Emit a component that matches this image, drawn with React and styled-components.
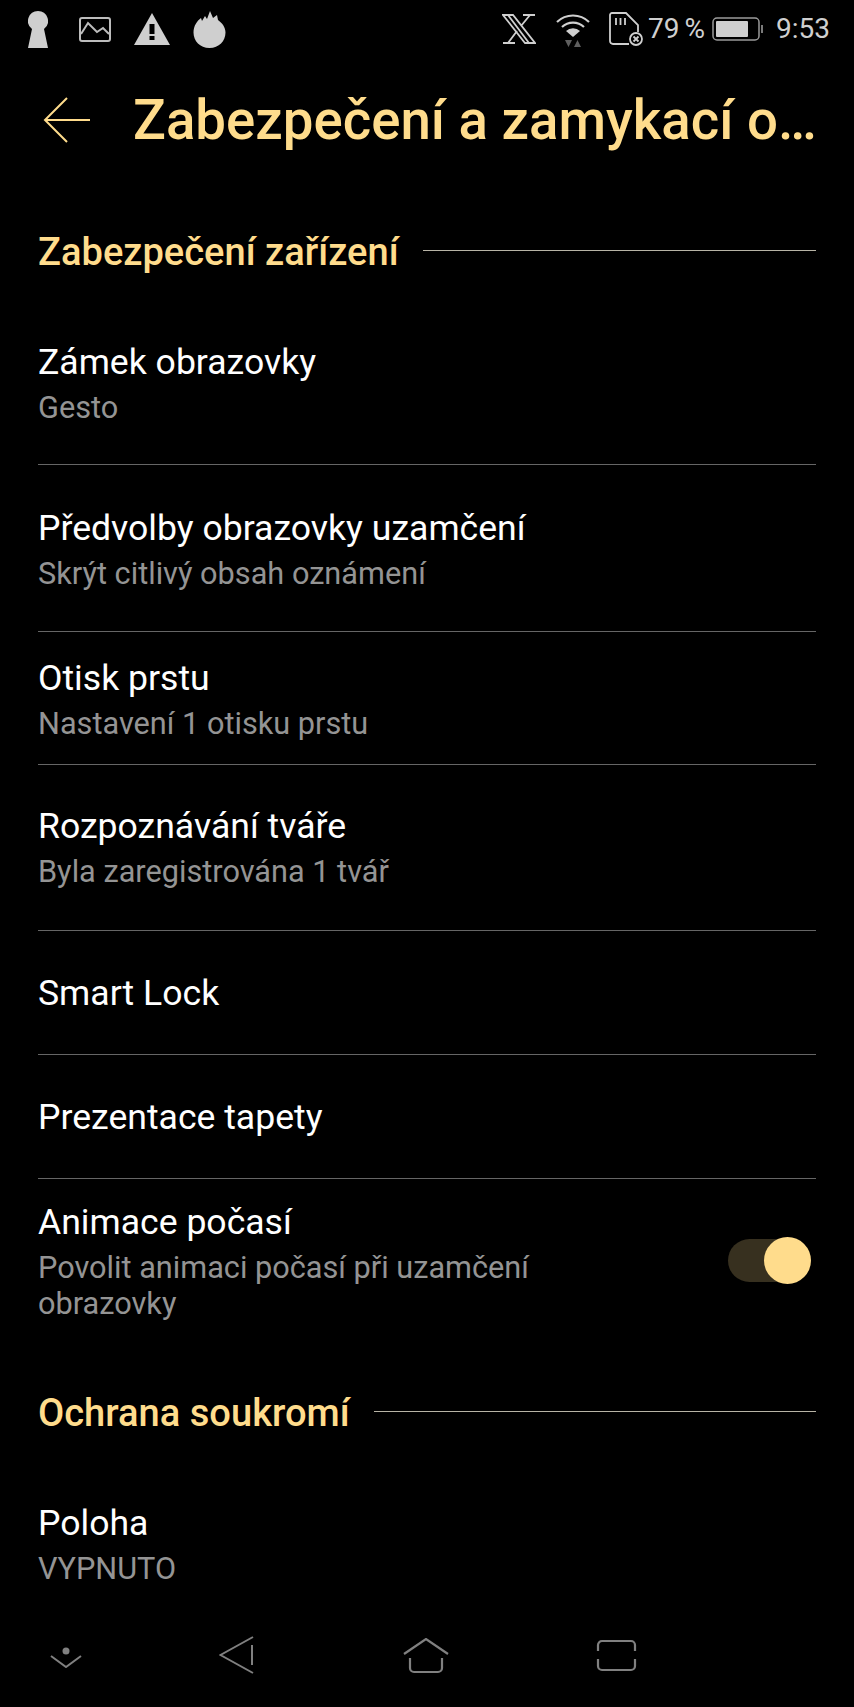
import React from "react";
import styled, { createGlobalStyle } from "styled-components";

const GOLD = "#ffdc8c";

const GlobalStyle = createGlobalStyle`
  html, body {
    margin: 0;
    background: #000;
  }
  * {
    box-sizing: border-box;
  }
`;

const Screen = styled.div`
  width: 854px;
  height: 1707px;
  background: #000;
  color: #fff;
  font-family: Roboto, "Noto Sans", sans-serif;
  display: flex;
  flex-direction: column;
  overflow: hidden;
`;

const StatusBar = styled.div`
  height: 58px;
  display: flex;
  align-items: flex-start;
  justify-content: space-between;
  padding: 10px 24px 0 28px;
`;

const StatusGroup = styled.div`
  display: flex;
  align-items: center;
  height: 38px;
`;

const StatusIcon = styled.svg`
  display: block;
  flex: none;
  margin-left: ${(p) => p.$ml || 0}px;
`;

const StatusText = styled.span`
  font-size: 28px;
  line-height: 38px;
  word-spacing: -2px;
  color: #cfcfcf;
  margin-left: ${(p) => p.$ml || 0}px;
`;

const AppBar = styled.header`
  height: 124px;
  display: flex;
  align-items: center;
  padding: 0 38px 0 43px;
`;

const BackButton = styled.svg`
  flex: none;
  margin-right: 42px;
`;

const Title = styled.h1`
  margin: 0;
  font-size: 54.6px;
  font-weight: 500;
  line-height: 60px;
  color: ${GOLD};
  white-space: nowrap;
`;

const Main = styled.main`
  flex: 1;
  min-height: 0;
  overflow: hidden;
  padding: 0 38px;
`;

const SectionHead = styled.div`
  display: flex;
  align-items: center;
  gap: 24px;
  height: 46px;
  margin-top: ${(p) => p.$mt}px;
`;

const SectionTitle = styled.h2`
  margin: 0;
  font-size: 38.1px;
  font-weight: 500;
  line-height: 46px;
  color: ${GOLD};
  white-space: nowrap;
`;

const SectionLine = styled.span`
  flex: 1;
  height: 1px;
  background: #b8b4a6;
  margin-top: -3px;
`;

const Row = styled.div`
  display: flex;
  align-items: center;
  justify-content: space-between;
  padding: ${(p) => p.$top}px 0 ${(p) => p.$bottom}px;
  border-bottom: ${(p) => (p.$plain ? "none" : "1px solid #666")};
`;

const RowText = styled.div`
  width: 560px;
`;

const RowTitle = styled.div`
  font-size: 35.6px;
  line-height: 46px;
  color: #fff;
  white-space: nowrap;
`;

const RowSub = styled.div`
  margin-top: 5px;
  font-size: 30.7px;
  line-height: 36px;
  color: #949494;
`;

const Toggle = styled.div`
  position: relative;
  width: 72px;
  height: 43px;
  margin-right: 16px;
  border-radius: 22px;
  background: #37301f;
  flex: none;
`;

const Knob = styled.span`
  position: absolute;
  top: -2px;
  right: -11px;
  width: 47px;
  height: 47px;
  border-radius: 50%;
  background: ${GOLD};
`;

const NavBar = styled.nav`
  height: 75px;
  display: flex;
  align-items: flex-start;
  padding: 0 0 0 50px;
`;

const NavIcon = styled.svg`
  display: block;
  flex: none;
  margin-left: ${(p) => p.$ml || 0}px;
  margin-top: ${(p) => p.$mt || 0}px;
`;

const rows = [
  { title: "Zámek obrazovky", sub: "Gesto", top: 64, bottom: 38 },
  { title: "Předvolby obrazovky uzamčení", sub: "Skrýt citlivý obsah oznámení", top: 40, bottom: 39 },
  { title: "Otisk prstu", sub: "Nastavení 1 otisku prstu", top: 23, bottom: 22 },
  { title: "Rozpoznávání tváře", sub: "Byla zaregistrována 1 tvář", top: 38, bottom: 40 },
  { title: "Smart Lock", top: 39, bottom: 38 },
  { title: "Prezentace tapety", top: 39, bottom: 38 },
];

const SettingRow = ({ title, sub, top, bottom, plain, children }) => (
  <Row $top={top} $bottom={bottom} $plain={plain}>
    <RowText>
      <RowTitle>{title}</RowTitle>
      {sub && <RowSub>{sub}</RowSub>}
    </RowText>
    {children}
  </Row>
);

const App = () => (
  <Screen>
    <GlobalStyle />
    <StatusBar>
      <StatusGroup>
        <StatusIcon width="20" height="37" viewBox="0 0 20 37">
          <path d="M10 0a10 10 0 0 1 6 18l4 19H0l4-19a10 10 0 0 1 6-18z" fill="#cfcfcf" />
        </StatusIcon>
        <StatusIcon $ml={31} width="32" height="25" viewBox="0 0 32 25" fill="none" stroke="#bdbdbd" strokeWidth="2">
          <rect x="1" y="1" width="30" height="23" rx="2" />
          <path d="M2 17l7-11 9 9 6-4 6 6" />
        </StatusIcon>
        <StatusIcon $ml={23} width="36" height="32" viewBox="0 0 36 32">
          <path fillRule="evenodd" d="M18 0l18 32H0zM15.500 11v10h5V11zM15.500 23v4h5v-4z" fill="#cfcfcf" />
        </StatusIcon>
        <StatusIcon $ml={23} width="33" height="37" viewBox="0 0 33 37">
          <path d="M16.500 37C7 37 .5 30 .5 21.500.5 15 4 10 8 7l1 3 3-5 2 3 3-8 3 7 4-3 1 5c4 3 7.500 7 7.500 12.500C32.500 30 26 37 16.500 37z" fill="#cfcfcf" />
        </StatusIcon>
      </StatusGroup>
      <StatusGroup>
        <StatusIcon width="34" height="30" viewBox="0 0 34 30" fill="none" stroke="#cfcfcf" strokeWidth="1.800">
          <path d="M1 1h10l22 28H23zM6 1l21 28M21 1h12M1 29h12M28 1l-9 11M15 17L6 29" />
        </StatusIcon>
        <StatusIcon $ml={20} width="34" height="35" viewBox="0 0 34 35" fill="none">
          <path d="M1 10a23 23 0 0 1 32 0M6 15a16 16 0 0 1 22 0" stroke="#cfcfcf" strokeWidth="2.200" />
          <path d="M10 19a10 10 0 0 1 14 0l-7 6z" fill="#cfcfcf" />
          <path d="M9 28h7l-3.500 7zM18 35l3.500-7 3.500 7z" fill="#5f5f5f" />
        </StatusIcon>
        <StatusIcon $ml={19} width="34" height="34" viewBox="0 0 34 34" fill="none" stroke="#cfcfcf" strokeWidth="1.800">
          <path d="M20 32H4a3 3 0 0 1-3-3V3a2 2 0 0 1 2-2h14l12 12v7" />
          <path d="M7 6v7M11.500 6v7M16 6v7" />
          <circle cx="27" cy="27" r="6" />
          <path d="M24.500 24.500l5 5M29.500 24.500l-5 5" />
        </StatusIcon>
        <StatusText $ml={5}>79 %</StatusText>
        <StatusIcon $ml={7} width="51" height="24" viewBox="0 0 51 24" fill="none">
          <rect x="1" y="1" width="46" height="22" rx="4" stroke="#9a9a9a" strokeWidth="1.500" />
          <rect x="4" y="4" width="32" height="16" rx="1" fill="#cfcfcf" />
          <rect x="49" y="8" width="2" height="8" fill="#7a7a7a" />
        </StatusIcon>
        <StatusText $ml={13}>9:53</StatusText>
      </StatusGroup>
    </StatusBar>

    <AppBar>
      <BackButton width="48" height="46" viewBox="0 0 48 46" fill="none" stroke={GOLD} strokeWidth="2">
        <path d="M47 23H2M24 1L2 23l22 22" />
      </BackButton>
      <Title>Zabezpečení a zamykací o…</Title>
    </AppBar>

    <Main>
      <SectionHead $mt={47}>
        <SectionTitle>Zabezpečení zařízení</SectionTitle>
        <SectionLine />
      </SectionHead>
      {rows.map((r) => (
        <SettingRow key={r.title} {...r} />
      ))}
      <SettingRow
        title="Animace počasí"
        sub="Povolit animaci počasí při uzamčení obrazovky"
        top={20}
        bottom={0}
        plain
      >
        <Toggle>
          <Knob />
        </Toggle>
      </SettingRow>
      <SectionHead $mt={68}>
        <SectionTitle>Ochrana soukromí</SectionTitle>
        <SectionLine />
      </SectionHead>
      <SettingRow title="Poloha" sub="VYPNUTO" top={64} bottom={0} plain />
    </Main>

    <NavBar>
      <NavIcon $mt={15} width="32" height="21" viewBox="0 0 32 21" fill="none" stroke="#808080" strokeWidth="2">
        <circle cx="16" cy="4" r="3.500" fill="#808080" stroke="none" />
        <path d="M1 9l15 11 15-11" />
      </NavIcon>
      <NavIcon $ml={137} $mt={4} width="36" height="38" viewBox="0 0 36 38" fill="none" stroke="#808080" strokeWidth="2">
        <path d="M34 1L1.500 19 34 37M33 9v20" />
      </NavIcon>
      <NavIcon $ml={148} $mt={6} width="46" height="36" viewBox="0 0 46 36" fill="none" stroke="#808080" strokeWidth="2.200">
        <path d="M1 16L23 1l22 15M7 20v10a4 4 0 0 0 4 4h24a4 4 0 0 0 4-4V20" />
      </NavIcon>
      <NavIcon $ml={147} $mt={7} width="41" height="33" viewBox="0 0 41 33" fill="none" stroke="#808080" strokeWidth="2.200">
        <path d="M2 12V6a4 4 0 0 1 4-4h29a4 4 0 0 1 4 4v6M2 20v7a4 4 0 0 0 4 4h29a4 4 0 0 0 4-4v-7" />
      </NavIcon>
    </NavBar>
  </Screen>
);

export default App;
